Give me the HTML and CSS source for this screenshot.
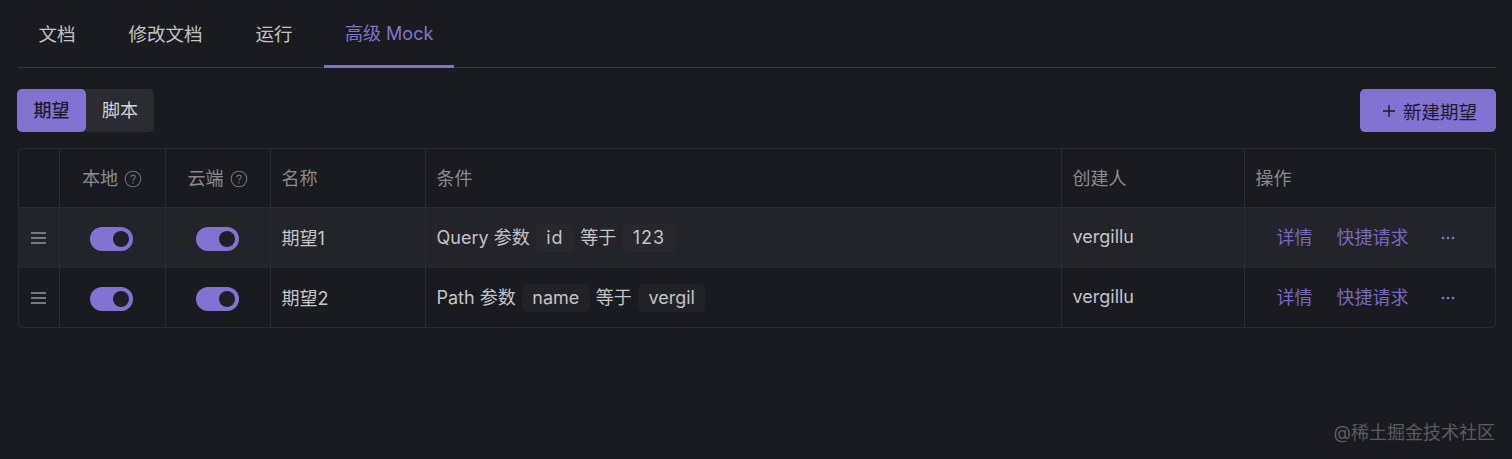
FILE: index.html
```html
<!DOCTYPE html>
<html lang="zh-CN">
<head>
    <meta charset="UTF-8">
    <title>高级 Mock</title>
    <link rel="stylesheet" href="styles.css">
</head>
<body>
    <!-- Tabs -->
    <nav class="tabs">
        <a class="tab">文档</a>
        <a class="tab">修改文档</a>
        <a class="tab">运行</a>
        <a class="tab active">高级 Mock</a>
    </nav>

    <!-- Toolbar -->
    <div class="toolbar">
        <div class="segment">
            <span class="segment-item selected">期望</span>
            <span class="segment-item">脚本</span>
        </div>
        <button class="new-btn">
            <svg width="14" height="14" viewBox="0 0 14 14"><path d="M7 1v12M1 7h12" stroke="currentColor" stroke-width="1.4" fill="none"/></svg>
            新建期望
        </button>
    </div>

    <!-- Table -->
    <div class="table-wrap">
        <table>
            <colgroup>
                <col class="col-drag">
                <col class="col-local">
                <col class="col-cloud">
                <col class="col-name">
                <col>
                <col class="col-owner">
                <col class="col-actions">
            </colgroup>
            <thead>
                <tr>
                    <th></th>
                    <th class="center">本地 <svg class="help" width="18" height="18" viewBox="0 0 18 18"><circle cx="9" cy="9" r="7.8" fill="none" stroke="currentColor" stroke-width="1.1"/><path d="M6.9 7.2c0-1.3 1-2.1 2.2-2.1s2.1.8 2.1 1.9c0 1.800-2.200 1.800-2.200 3.700" fill="none" stroke="currentColor" stroke-width="1.1"/><circle cx="9" cy="12.700" r=".8" fill="currentColor"/></svg></th>
                    <th class="center">云端 <svg class="help" width="18" height="18" viewBox="0 0 18 18"><circle cx="9" cy="9" r="7.8" fill="none" stroke="currentColor" stroke-width="1.1"/><path d="M6.9 7.2c0-1.3 1-2.1 2.2-2.1s2.1.8 2.1 1.9c0 1.800-2.200 1.800-2.200 3.700" fill="none" stroke="currentColor" stroke-width="1.1"/><circle cx="9" cy="12.700" r=".8" fill="currentColor"/></svg></th>
                    <th>名称</th>
                    <th>条件</th>
                    <th>创建人</th>
                    <th>操作</th>
                </tr>
            </thead>
            <tbody>
                <tr class="hover">
                    <td class="center"><span class="drag"></span></td>
                    <td class="center"><span class="switch"></span></td>
                    <td class="center"><span class="switch"></span></td>
                    <td>期望1</td>
                    <td class="cond">Query 参数 <code class="digits">id</code> 等于 <code class="digits">123</code></td>
                    <td>vergillu</td>
                    <td>
                        <div class="actions">
                            <a>详情</a>
                            <a>快捷请求</a>
                            <svg width="14" height="4" viewBox="0 0 14 4"><circle cx="2" cy="2" r="1.300"/><circle cx="7" cy="2" r="1.300"/><circle cx="12" cy="2" r="1.300"/></svg>
                        </div>
                    </td>
                </tr>
                <tr>
                    <td class="center"><span class="drag"></span></td>
                    <td class="center"><span class="switch"></span></td>
                    <td class="center"><span class="switch"></span></td>
                    <td>期望2</td>
                    <td class="cond">Path 参数 <code>name</code> 等于 <code>vergil</code></td>
                    <td>vergillu</td>
                    <td>
                        <div class="actions">
                            <a>详情</a>
                            <a>快捷请求</a>
                            <svg width="14" height="4" viewBox="0 0 14 4"><circle cx="2" cy="2" r="1.300"/><circle cx="7" cy="2" r="1.300"/><circle cx="12" cy="2" r="1.300"/></svg>
                        </div>
                    </td>
                </tr>
            </tbody>
        </table>
    </div>

    <div class="watermark">@稀土掘金技术社区</div>
</body>
</html>
```

FILE: styles.css
```css
/* Global Styles */
html, body {
    height: 100%;
}

body {
    position: relative;
    margin: 0;
    padding: 0 16px 0 18px;
    overflow: hidden;
    box-sizing: border-box;
    background-color: #1a1b20;
    color: #c4c4c7;
    font-family: Inter, "Noto Sans CJK SC", sans-serif;
    font-size: 18px;
}

/* Tabs */
.tabs {
    display: flex;
    gap: 12px;
    height: 67px;
    border-bottom: 1px solid #3a3b40;
}

.tab {
    height: 67px;
    padding: 0 20.5px;
    line-height: 68px;
    font-size: 18.5px;
    color: #c4c4c7;
}

.tab.active {
    height: 65px;
    margin-left: -1px;
    padding: 0 21px;
    font-size: 18px;
    color: #8273cc;
    border-bottom: 3px solid #8070cc;
}

/* Toolbar */
.toolbar {
    display: flex;
    justify-content: space-between;
    align-items: center;
    margin-top: 21px;
    margin-left: -1px;
}

.segment {
    display: flex;
    height: 43px;
    border-radius: 5px;
    background-color: #2b2c31;
}

.segment-item {
    width: 68px;
    line-height: 43px;
    text-align: center;
    color: #d4d4d6;
}

.segment-item.selected {
    width: 69px;
    border-radius: 5px;
    background-color: #8272d2;
    color: #1d1c2b;
    font-weight: 500;
}

.new-btn {
    display: flex;
    align-items: center;
    gap: 7px;
    height: 43px;
    padding: 0 19px 0 22px;
    border: none;
    border-radius: 5px;
    background-color: #8272d2;
    color: #1d1c2b;
    font-family: inherit;
    font-size: 18.5px;
}

/* Table */
.table-wrap {
    margin-top: 16px;
    border: 1px solid #2b2c31;
    border-radius: 4px;
    overflow: hidden;
}

table {
    width: 100%;
    border-collapse: collapse;
    table-layout: fixed;
}

.col-drag {
    width: 40px;
}

.col-local {
    width: 106px;
}

.col-cloud {
    width: 105px;
}

.col-name {
    width: 155px;
}

.col-owner {
    width: 183px;
}

.col-actions {
    width: 251px;
}

th, td {
    padding: 0 11px 2px;
    border-left: 1px solid #2b2c31;
    text-align: left;
    font-weight: 400;
    white-space: nowrap;
}

th:first-child, td:first-child {
    border-left: none;
}

th {
    height: 56px;
    color: #8a8a8e;
    border-bottom: 1px solid #2b2c31;
}

td {
    height: 57px;
    color: #c4c4c7;
}

td.cond {
    padding-bottom: 0;
}

tbody tr + tr td {
    border-top: 1px solid #25262b;
}

tr.hover td {
    background-color: #232429;
}

.center {
    text-align: center;
}

.help {
    margin-left: 1px;
    color: #6e6e72;
    vertical-align: -3px;
}

.drag {
    display: inline-block;
    width: 15px;
    height: 2px;
    vertical-align: middle;
    background-color: #77787c;
    box-shadow: 0 -5px 0 #77787c, 0 5px 0 #77787c;
}

.switch {
    position: relative;
    display: inline-block;
    width: 43px;
    height: 24px;
    margin-top: 5px;
    margin-left: -1px;
    border-radius: 12px;
    background-color: #8272d2;
    vertical-align: middle;
}

.switch::after {
    content: "";
    position: absolute;
    top: 4px;
    right: 4px;
    width: 16px;
    height: 16px;
    border-radius: 50%;
    background-color: #1f2026;
}

code {
    display: inline-block;
    margin: 0 1px;
    padding: 0 10.5px;
    height: 28px;
    line-height: 28px;
    border-radius: 5px;
    background-color: #27282d;
    font-family: inherit;
}

code.digits {
    letter-spacing: 1px;
}

tr + tr code {
    background-color: #212227;
}

.actions {
    display: flex;
    align-items: center;
    gap: 24px;
    margin-top: -2px;
    padding-left: 21px;
    color: #7669bd;
}

.actions svg {
    margin: 4px 0 0 8px;
    fill: #8273cc;
}

/* Watermark */
.watermark {
    position: absolute;
    right: 17px;
    bottom: 15px;
    color: #5a5b5f;
    font-size: 18px;
}
```
